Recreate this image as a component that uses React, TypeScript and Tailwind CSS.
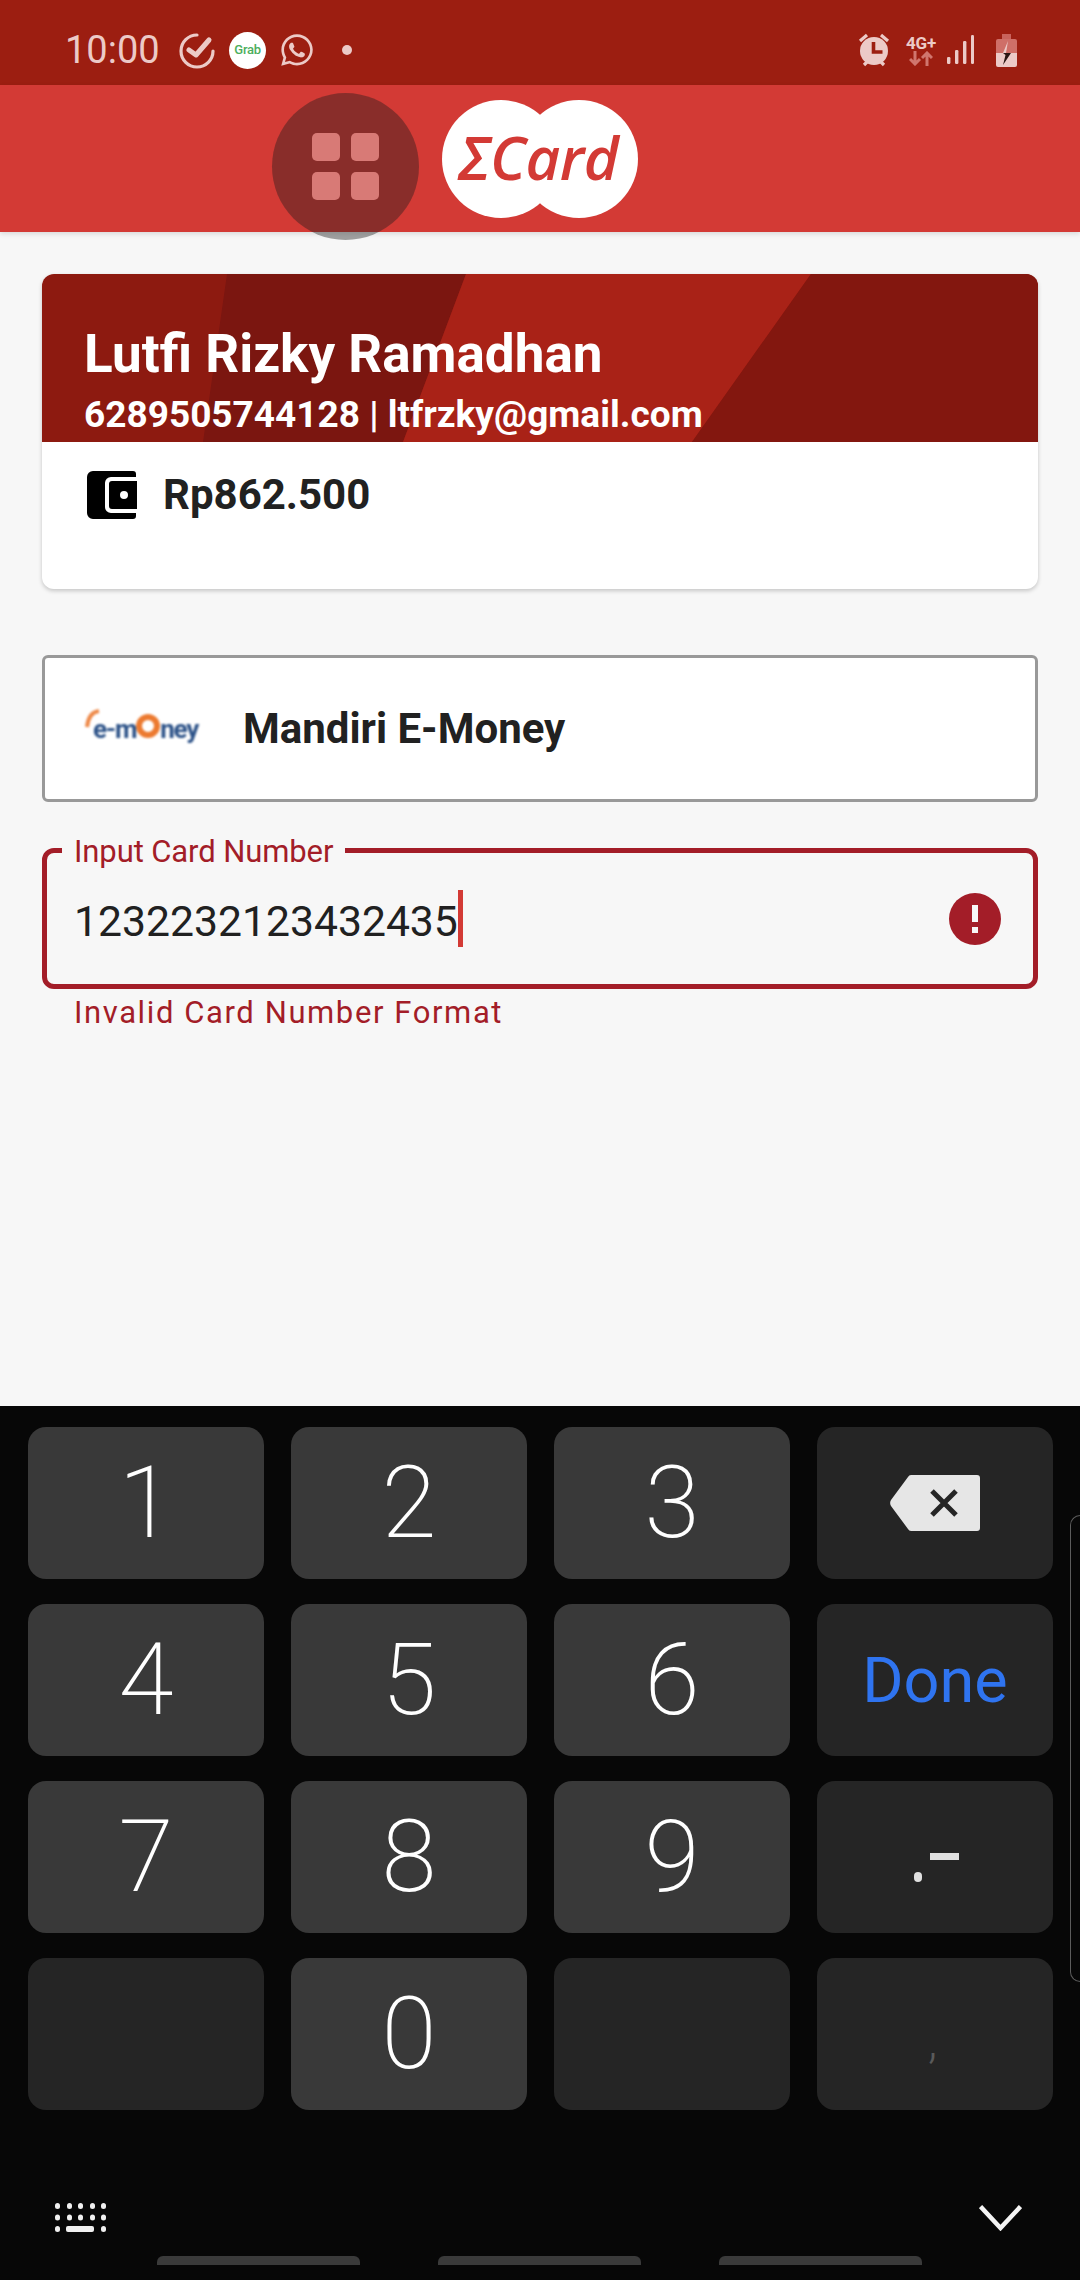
import React from 'react';
import { FaWhatsapp } from 'react-icons/fa';

const FG = '#eccac7';

function CheckCircleIcon() {
  return (
    <svg width="38" height="38" viewBox="0 0 38 38" fill="none" stroke={FG}>
      <path d="M35 20a16 16 0 1 1-16-16" strokeWidth="3.2" strokeLinecap="round" />
      <path d="M11 19l7 5 13-15" strokeWidth="5" strokeLinecap="round" strokeLinejoin="round" />
    </svg>
  );
}

function AlarmIcon() {
  return (
    <svg width="34" height="34" viewBox="0 0 34 34" fill="none">
      <circle cx="17" cy="18" r="14" fill={FG} />
      <path d="M3 8l7-6M31 8l-7-6M7 32l3-3M27 32l-3-3" stroke={FG} strokeWidth="3.2" />
      <path d="M16.5 9v10h9" stroke="#9c1e11" strokeWidth="3.6" fill="none" />
    </svg>
  );
}

function NetworkIcon() {
  return (
    <div className="flex w-[32px] flex-col items-center">
      <span className="text-[17px] font-bold leading-[16px] tracking-[-0.2px] text-[#eccac7]">4G+</span>
      <svg width="24" height="15" viewBox="0 0 24 15" fill="none" stroke="#d0766e" strokeWidth="3">
        <path d="M6 0v13M1 8l5 5 5-5M18 15V2M13 7l5-5 5 5" />
      </svg>
    </div>
  );
}

function SignalIcon() {
  return (
    <svg width="28" height="30" viewBox="0 0 28 30" fill={FG}>
      <rect x="1" y="22" width="3.4" height="7" rx="1.2" />
      <rect x="9" y="15" width="3.4" height="14" rx="1.2" />
      <rect x="17" y="6" width="3.4" height="23" rx="1.2" />
      <rect x="25" y="0" width="3" height="29" rx="1.2" />
    </svg>
  );
}

function BatteryIcon() {
  return (
    <svg width="22" height="33" viewBox="0 0 22 33">
      <path d="M6 0h9v5H6z" fill="#c9635c" />
      <path d="M2 5h17a2 2 0 0 1 2 2v12H0V7a2 2 0 0 1 2-2z" fill="#cf6f68" />
      <path d="M0 19h21v12a2 2 0 0 1-2 2H2a2 2 0 0 1-2-2z" fill={FG} />
      <path d="M12 7L7 19h3z" fill={FG} />
      <path d="M7 19h8l-8 12 2.500-10z" fill="#2a1512" />
    </svg>
  );
}

function StatusBar() {
  return (
    <div className="flex h-[85px] shrink-0 items-center bg-[#9c1e11] pl-[65px] pr-[62px] pt-[15px] text-[#eccac7]">
      <span className="w-[113px] text-[38px] leading-none">10:00</span>
      <CheckCircleIcon />
      <div className="ml-[13px] flex h-[37px] w-[37px] items-center justify-center rounded-full bg-white">
        <span className="text-[13px] font-medium tracking-[-0.3px] text-[#4cae5c]">Grab</span>
      </div>
      <FaWhatsapp className="ml-[13px] text-[36px]" />
      <span className="ml-[27px] h-[10px] w-[10px] rounded-full bg-[#eccac7]" />
      <div className="ml-auto flex items-center">
        <AlarmIcon />
        <div className="ml-[14px]">
          <NetworkIcon />
        </div>
        <div className="ml-[9px]">
          <SignalIcon />
        </div>
        <div className="ml-[22px]">
          <BatteryIcon />
        </div>
      </div>
    </div>
  );
}

function Header() {
  return (
    <div className="relative z-10 flex h-[147px] shrink-0 items-center bg-[#d33a35] pl-[442px] shadow-[0_2px_5px_rgba(0,0,0,0.12)]">
      {/* touch ripple over the menu button */}
      <div className="absolute left-[272px] top-[8px] flex h-[147px] w-[147px] items-center justify-center rounded-full bg-[rgba(28,28,28,0.4)]">
        <div className="grid grid-cols-2 gap-[11px]">
          <span className="h-[28px] w-[28px] rounded-[5px] bg-[#d87a76]" />
          <span className="h-[28px] w-[28px] rounded-[5px] bg-[#d87a76]" />
          <span className="h-[28px] w-[28px] rounded-[5px] bg-[#d87a76]" />
          <span className="h-[28px] w-[28px] rounded-[5px] bg-[#d87a76]" />
        </div>
      </div>
      <div className="relative flex h-[118px] w-[196px] items-center justify-center">
        <span className="absolute left-0 top-0 h-[118px] w-[118px] rounded-full bg-white" />
        <span className="absolute right-0 top-0 h-[118px] w-[118px] rounded-full bg-white" />
        <span className="relative mr-[3px] mt-[-3px] font-['Open_Sans',sans-serif] text-[60px] font-semibold italic leading-none tracking-[-0.5px] text-[#d33a35]">
          ΣCard
        </span>
      </div>
    </div>
  );
}

function ProfileCard() {
  return (
    <div className="mx-[42px] mt-[42px] h-[315px] overflow-hidden rounded-[12px] bg-white shadow-[0_2px_4px_rgba(0,0,0,0.2)]">
      <div className="relative h-[168px] bg-[#8d1a10] pl-[42px] pt-[50px] text-white">
        {/* diagonal bands of the card background */}
        <svg className="absolute left-0 top-0" width="996" height="168" viewBox="0 0 996 168">
          <path d="M185 0h239l-63 168H161z" fill="#7b1610" />
          <path d="M424 0h345L650 168H361z" fill="#a92217" />
          <path d="M769 0h227v168H650z" fill="#83170f" />
        </svg>
        <div className="relative text-[53px] font-bold leading-[60px]">Lutfi Rizky Ramadhan</div>
        <div className="relative mt-[10px] whitespace-nowrap text-[37px] font-bold leading-[42px]">
          6289505744128 | ltfrzky@gmail.com
        </div>
      </div>
      <div className="flex items-start pl-[45px] pt-[29px]">
        <svg width="50" height="48" viewBox="0 0 50 48">
          <path
            fillRule="evenodd"
            d="M6 0h40a3 3 0 0 1 3 3v3H24a6 6 0 0 0-6 6v24a6 6 0 0 0 6 6h25v3a3 3 0 0 1-3 3H6a6 6 0 0 1-6-6V6a6 6 0 0 1 6-6z"
          />
          <path
            fillRule="evenodd"
            d="M25 10h25v28H25a3 3 0 0 1-3-3V13a3 3 0 0 1 3-3zm12 10a4 4 0 1 0 0 8 4 4 0 0 0 0-8z"
          />
        </svg>
        <span className="ml-[26px] mt-[1px] text-[42px] font-bold leading-[46px] text-[#212121]">Rp862.500</span>
      </div>
    </div>
  );
}

function EMoneyLogo() {
  return (
    <div className="relative flex h-[40px] w-[114px] items-center blur-[1px]">
      <svg className="absolute left-0 top-0" width="16" height="22" viewBox="0 0 16 22" fill="none">
        <path d="M14 2C7 3 3 8 2 18" stroke="#ee8a4a" strokeWidth="4" />
      </svg>
      <div className="flex items-center whitespace-nowrap pl-[8px] text-[26px] font-bold leading-[34px] tracking-[-1.2px] text-[#2c5288]">
        <span>e-m</span>
        <span className="mb-[5px] h-[24px] w-[24px] shrink-0 rounded-full border-[6px] border-[#ec7a30]" />
        <span>ney</span>
      </div>
    </div>
  );
}

function CardTypeSelect() {
  return (
    <div className="mx-[42px] mt-[66px] flex h-[147px] items-center rounded-[6px] border-[3px] border-[#999999] bg-white pl-[40px]">
      <EMoneyLogo />
      <span className="ml-[44px] text-[42px] font-bold leading-none text-[#212121]">Mandiri E-Money</span>
    </div>
  );
}

function CardNumberField() {
  return (
    <div className="mx-[42px] mt-[46px]">
      <div className="relative flex h-[141px] items-center rounded-[12px] border-[5px] border-[#a31d28] pl-[27px] pr-[32px]">
        <span className="absolute left-[15px] top-[-20px] bg-[#f7f7f7] px-[12px] text-[31px] leading-[38px] tracking-[-0.1px] text-[#a31d28]">
          Input Card Number
        </span>
        <span className="mt-[5px] text-[42.7px] leading-none text-[#212121]">1232232123432435</span>
        <span className="h-[57px] w-[5px] bg-[#d33a35]" />
        <div className="ml-auto flex h-[52px] w-[52px] items-center justify-center rounded-full bg-[#a31d28]">
          <svg width="8" height="32" viewBox="0 0 8 32" fill="#f7f7f7">
            <rect x="1" y="2" width="6" height="17" />
            <rect x="1" y="24" width="6" height="6" />
          </svg>
        </div>
      </div>
      <div className="ml-[32px] mt-[6px] text-[31px] leading-[36px] tracking-[1.6px] text-[#a31d28]">
        Invalid Card Number Format
      </div>
    </div>
  );
}

function BackspaceIcon() {
  return (
    <svg width="90" height="56" viewBox="0 0 90 56">
      <path d="M21 0h66a3 3 0 0 1 3 3v50a3 3 0 0 1-3 3H21a4 4 0 0 1-3-2L1 31a6 6 0 0 1 0-6L18 2a4 4 0 0 1 3-2z" fill="#e6e6e6" />
      <path d="M42 16l24 24M66 16L42 40" stroke="#252525" strokeWidth="5" />
    </svg>
  );
}

function DigitKey({ label }: { label: string }) {
  return (
    <div className="flex h-[152px] items-center justify-center rounded-[18px] bg-[#393939] text-[100px] font-extralight leading-none text-white">
      {label}
    </div>
  );
}

function FnKey({ children }: { children?: React.ReactNode }) {
  return <div className="relative flex h-[152px] items-center justify-center rounded-[18px] bg-[#252525]">{children}</div>;
}

function Keyboard() {
  return (
    <div className="relative h-[874px] shrink-0 bg-[#070707]">
      <div className="grid grid-cols-4 gap-x-[27px] gap-y-[25px] pl-[28px] pr-[27px] pt-[21px]">
        <DigitKey label="1" />
        <DigitKey label="2" />
        <DigitKey label="3" />
        <FnKey>
          <BackspaceIcon />
        </FnKey>
        <DigitKey label="4" />
        <DigitKey label="5" />
        <DigitKey label="6" />
        <FnKey>
          <span className="text-[63px] leading-none text-[#2f74f0]">Done</span>
        </FnKey>
        <DigitKey label="7" />
        <DigitKey label="8" />
        <DigitKey label="9" />
        <FnKey>
          <span className="absolute left-[97px] top-[91px] h-[10px] w-[8px] rounded-full bg-[#e0e0e0]" />
          <span className="absolute left-[113px] top-[72px] h-[7px] w-[29px] bg-[#e0e0e0]" />
        </FnKey>
        <FnKey />
        <DigitKey label="0" />
        <FnKey />
        <FnKey>
          <span className="absolute left-[111px] top-[59px] text-[48px] font-light leading-none text-[#5a5a5a]">,</span>
        </FnKey>
      </div>

      <div className="mt-[93px] flex items-center justify-between pl-[55px] pr-[58px]">
        <svg width="51" height="29" viewBox="0 0 51 29" fill="#f0f0f0">
          {[0, 12, 23, 35, 46].map((x) => (
            <rect key={`a${x}`} x={x} y="0" width="5" height="6" rx="2.500" />
          ))}
          {[0, 12, 23, 35, 46].map((x) => (
            <rect key={`b${x}`} x={x} y="11.500" width="5" height="6" rx="2.500" />
          ))}
          <rect x="0" y="23" width="5" height="6" rx="2.500" />
          <rect x="11" y="23" width="28" height="6" rx="2" />
          <rect x="46" y="23" width="5" height="6" rx="2.500" />
        </svg>
        <svg width="43" height="26" viewBox="0 0 43 26" fill="none" stroke="#f4f4f4" strokeWidth="4.500">
          <path d="M1.500 1.500L21.500 23L41.500 1.500" />
        </svg>
      </div>

      <div className="mt-[24px] flex gap-[78px] pl-[157px]">
        <span className="h-[9px] w-[203px] rounded-t-[6px] bg-[#3a3a3a]" />
        <span className="h-[9px] w-[203px] rounded-t-[6px] bg-[#3a3a3a]" />
        <span className="h-[9px] w-[203px] rounded-t-[6px] bg-[#3a3a3a]" />
      </div>

      {/* edge panel handle */}
      <div className="absolute right-0 top-[109px] h-[467px] w-[10px] rounded-l-[12px] border-y border-l border-[#5c5c5c]" />
    </div>
  );
}

export default function App() {
  return (
    <div className="flex h-[2280px] w-[1080px] flex-col overflow-hidden bg-[#f7f7f7] font-['Roboto',sans-serif]">
      <StatusBar />
      <Header />
      <div className="flex-1">
        <ProfileCard />
        <CardTypeSelect />
        <CardNumberField />
      </div>
      <Keyboard />
    </div>
  );
}
